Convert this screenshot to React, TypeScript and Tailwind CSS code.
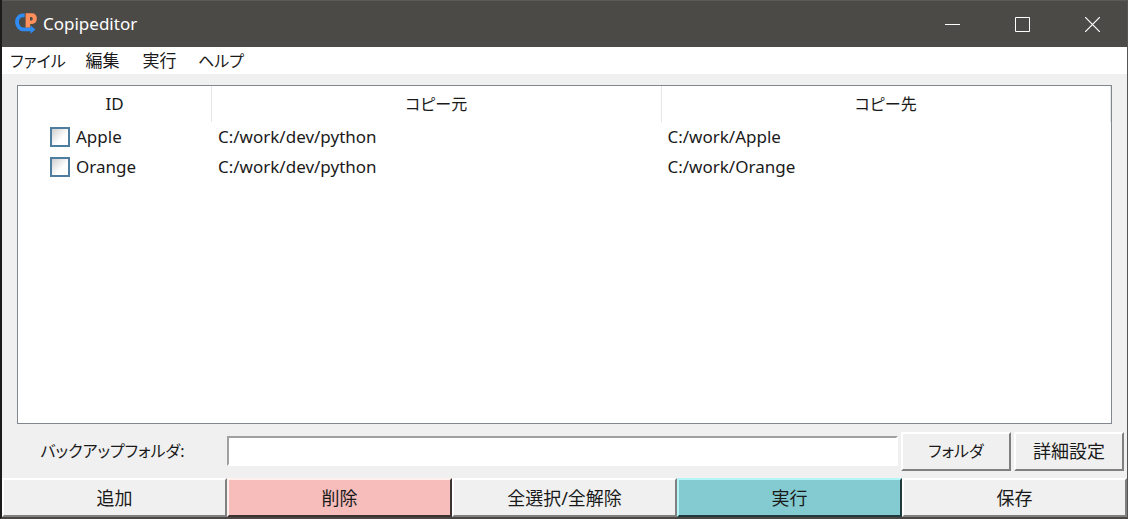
import { useState } from "react";

const menus = [
  { label: "ファイル", look: "w-[72px] text-[16px]" },
  { label: "編集", look: "w-[57px] text-[17px]" },
  { label: "実行", look: "w-[57px] text-[17px]" },
  { label: "ヘルプ", look: "w-[66px] text-[16px]" },
];

const jobs = [
  { id: "Apple", from: "C:/work/dev/python", to: "C:/work/Apple" },
  { id: "Orange", from: "C:/work/dev/python", to: "C:/work/Orange" },
];

const raised =
  "border-2 border-t-white border-l-white border-r-[#808080] border-b-[#808080] bg-[#f0f0f0]";

const actions = [
  { label: "追加", look: raised },
  {
    label: "削除",
    look: "border-2 border-t-[#fff0ee] border-l-[#fff0ee] border-r-[#3c3232] border-b-[#3c3232] bg-[#f6bdbb]",
  },
  { label: "全選択/全解除", look: raised },
  {
    label: "実行",
    look: "border-2 border-t-[#b4f5f8] border-l-[#b4f5f8] border-r-[#22393b] border-b-[#22393b] bg-[#83cbd0]",
  },
  { label: "保存", look: raised },
];

function Logo() {
  return (
    <svg width="22" height="22" viewBox="0 0 22 22" fill="none" aria-hidden="true">
      <path d="M9.6 2.4H8C4.4 2.4 2 5 2 9s2.8 7.4 6.6 7.4H17" stroke="#2f8cf5" strokeWidth="3.8" />
      <path d="M15.6 12.6v8.2l4.8-4.3Z" fill="#2f8cf5" />
      <path
        fillRule="evenodd"
        d="M10.6.3h6.4c3 0 4.8 2 4.8 5.3s-1.8 5.4-4.8 5.4h-1.8v3.4h-4.6Zm4.4 3.6v3.6h1.3c.9 0 1.4-.7 1.4-1.8s-.5-1.8-1.4-1.8Z"
        fill="#ff8f5a"
      />
    </svg>
  );
}

export default function App() {
  const [checked, setChecked] = useState<string[]>([]);
  const toggle = (id: string) =>
    setChecked((c) => (c.includes(id) ? c.filter((x) => x !== id) : [...c, id]));

  return (
    <div className="flex min-h-screen flex-col border-r border-b-2 border-l-2 border-r-[#555] border-b-[#4a4745] border-l-[#1c1b1a] bg-[#f0f0f0] font-['Noto_Sans','Noto_Sans_CJK_JP',sans-serif] text-[17px] leading-6 text-[#1a1a1a] [font-feature-settings:'palt']">
      <header className="flex h-[47px] items-center border-t border-[#5c5a57] bg-[#4c4a47] pl-[13px] text-white">
        <Logo />
        <h1 className="ml-[6px] flex-1 text-[17px]">Copipeditor</h1>
        <button aria-label="最小化" className="flex h-full w-[70px] items-center justify-center">
          <svg width="15" height="15" viewBox="0 0 15 15" stroke="currentColor"><path d="M0 7.5h15" /></svg>
        </button>
        <button aria-label="最大化" className="flex h-full w-[70px] items-center justify-center">
          <svg width="15" height="15" viewBox="0 0 15 15" stroke="currentColor" fill="none"><path d="M.5.5h14v14H.5z" /></svg>
        </button>
        <button aria-label="閉じる" className="flex h-full w-[70px] items-center justify-center">
          <svg width="15" height="15" viewBox="0 0 15 15" stroke="currentColor" strokeWidth="1.2"><path d="m0 0 15 15M15 0 0 15" /></svg>
        </button>
      </header>

      <nav className="flex h-[27px] items-center bg-white">
        {menus.map((m) => (
          <button key={m.label} className={`${m.look} shrink-0 text-center whitespace-nowrap`}>
            {m.label}
          </button>
        ))}
      </nav>

      <main className="flex flex-1 flex-col pt-[11px]">
        <div className="mx-[15px] flex-1 border border-[#828790] bg-white">
          <table className="w-full table-fixed border-separate border-spacing-0">
            <colgroup>
              <col className="w-[194px]" />
              <col />
              <col />
            </colgroup>
            <thead>
              <tr className="h-[36px]">
                <th className="border-r border-[#e5e5e5] p-0 font-normal">ID</th>
                <th className="border-r border-[#e5e5e5] p-0 text-[16px] font-normal">コピー元</th>
                <th className="border-r border-[#e5e5e5] p-0 text-[16px] font-normal">コピー先</th>
              </tr>
            </thead>
            <tbody>
              {jobs.map((job) => (
                <tr key={job.id} className="h-[30px]">
                  <td className="p-0 pl-8">
                    <label className="flex items-center gap-[6px]">
                      <input
                        type="checkbox"
                        checked={checked.includes(job.id)}
                        onChange={() => toggle(job.id)}
                        className="size-5 appearance-none border-2 border-[#4f7d9f] bg-linear-to-br from-[#cfcfcf] to-white to-60% checked:bg-[#4f7d9f]"
                      />
                      {job.id}
                    </label>
                  </td>
                  <td className="p-0 pl-[6px]">{job.from}</td>
                  <td className="p-0 pl-[6px]">{job.to}</td>
                </tr>
              ))}
            </tbody>
          </table>
        </div>

        <div className="flex h-[54px] items-center pr-[3px]">
          <label htmlFor="backup" className="w-[225px] shrink-0 pr-[4px] text-center text-[16px] whitespace-nowrap">
            バックアップフォルダ:
          </label>
          <input
            id="backup"
            type="text"
            className="h-[30px] min-w-0 flex-1 border-2 border-t-[#a0a0a0] border-r-white border-b-white border-l-[#a0a0a0] bg-white px-1 outline-none"
          />
          <button className={`ml-[3px] h-[39px] w-[110px] shrink-0 text-[16px] ${raised}`}>フォルダ</button>
          <button className={`ml-[3px] h-[39px] w-[110px] shrink-0 text-[18px] ${raised}`}>詳細設定</button>
        </div>

        <div className="grid grid-cols-5">
          {actions.map((a) => (
            <button key={a.label} className={`h-[39px] text-[18px] ${a.look}`}>
              {a.label}
            </button>
          ))}
        </div>
      </main>
    </div>
  );
}
